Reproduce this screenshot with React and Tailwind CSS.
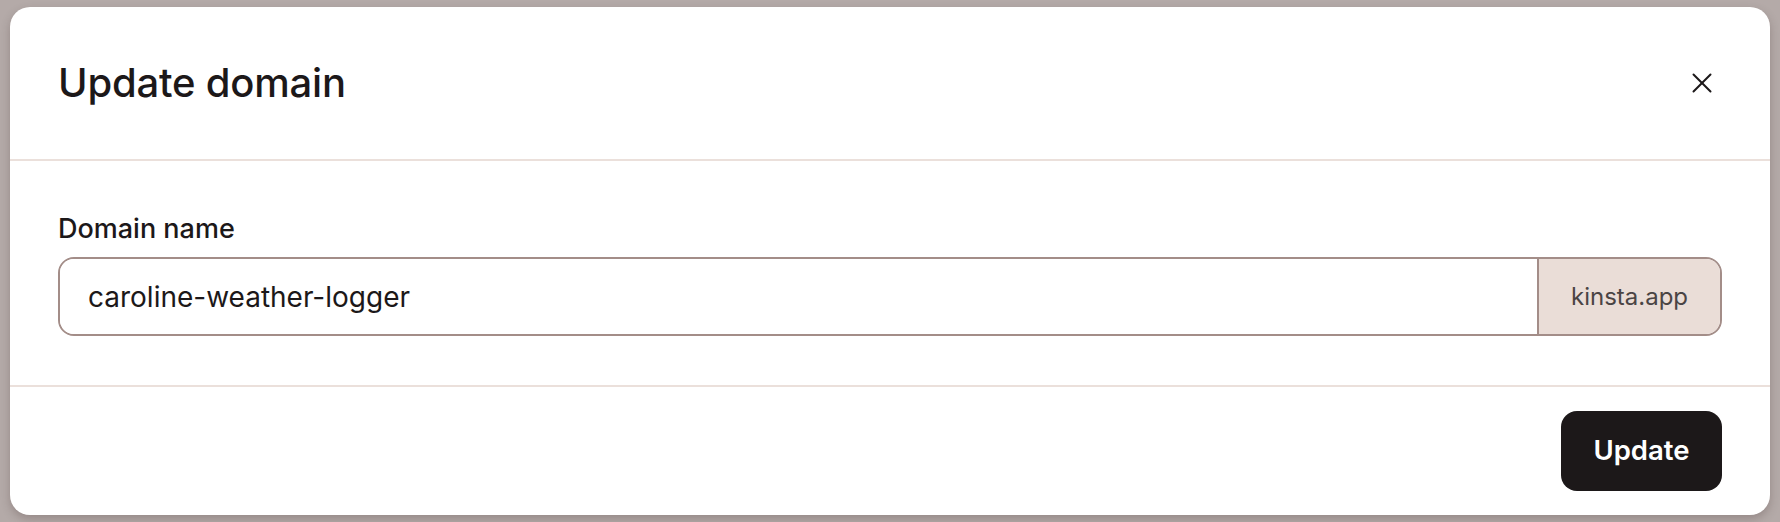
import { X } from 'lucide-react';

const App = () => {
  return (
    <div
      className="w-[1780px] h-[522px] bg-[#b4aaa8] pt-[7px] pl-[10px] overflow-hidden"
      style={{ fontFamily: 'Inter, "Noto Sans", sans-serif' }}
    >
      <div className="w-[1760px] h-[508px] bg-white rounded-[20px] shadow-[0_4px_10px_rgba(60,40,40,0.25)] flex flex-col text-[#1c1819]">
        {/* Header */}
        <div className="h-[154px] flex items-center justify-between pl-[48px] pr-[51px] border-b-2 border-[#ebe0db]">
          <h2 className="text-[40px] font-medium leading-none tracking-[-0.2px]">Update domain</h2>
          <button className="text-[#1c1819]">
            <X size={34} strokeWidth={1.4} />
          </button>
        </div>

        {/* Body */}
        <div className="px-[48px] pt-[51px] pb-[49px] border-b-2 border-[#ebe0db]">
          <label className="block text-[27px] font-medium leading-[34px] mb-[11px]">Domain name</label>
          <div className="flex h-[79px] border-2 border-[#a38d88] rounded-[16px] overflow-hidden">
            <input
              className="flex-1 px-[28px] text-[28px] outline-none bg-white text-[#1c1819]"
              defaultValue="caroline-weather-logger"
            />
            <div className="w-[183px] flex items-center justify-center bg-[#eaddd7] border-l-2 border-[#a38d88] text-[24px] text-[#4a4444]">
              kinsta.app
            </div>
          </div>
        </div>

        {/* Footer */}
        <div className="flex-1 flex items-center justify-end px-[48px]">
          <button className="h-[80px] w-[161px] rounded-[16px] bg-[#1c1819] text-white text-[27.5px] font-semibold">
            Update
          </button>
        </div>
      </div>
    </div>
  );
};

export default App;
